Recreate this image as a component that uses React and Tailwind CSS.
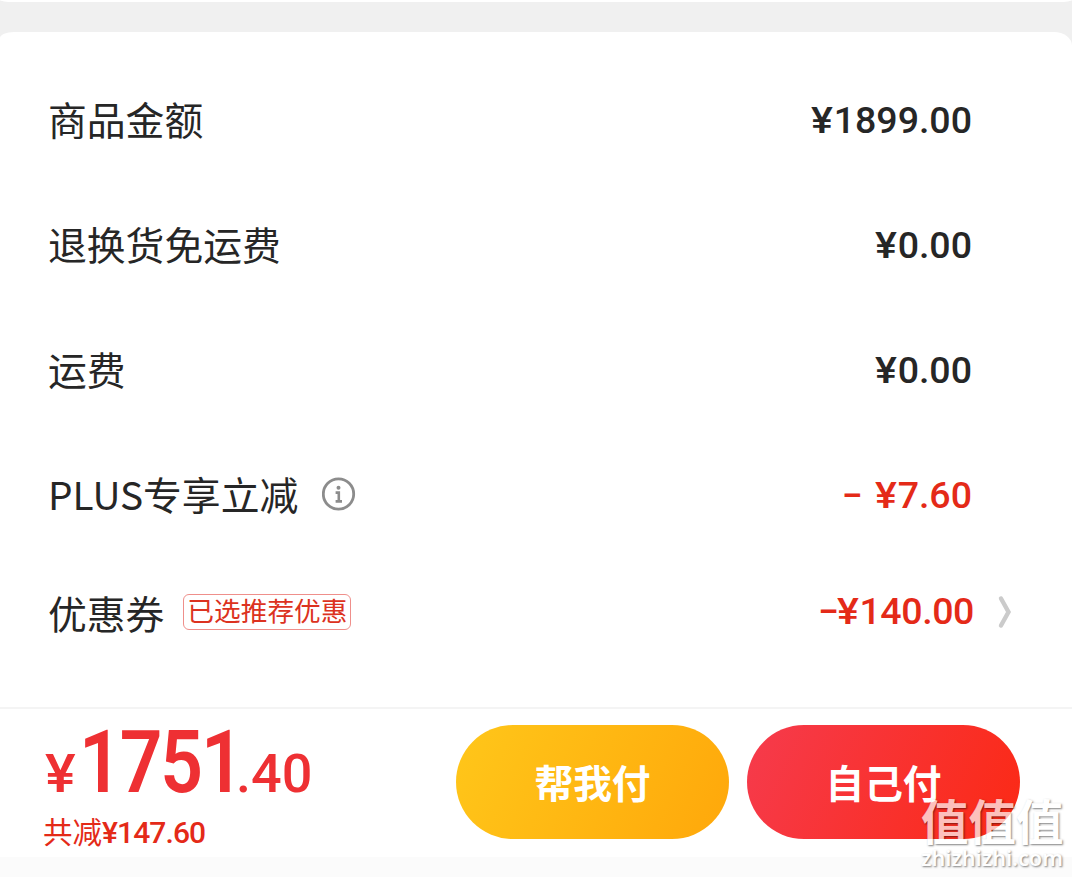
import clsx from "clsx";

const rows = [
  { label: "商品金额", amount: "1899.00" },
  { label: "退换货免运费", amount: "0.00" },
  { label: "运费", amount: "0.00" },
];

const InfoIcon = () => (
  <svg width="34" height="34" viewBox="0 0 34 34" fill="none">
    <circle cx="16.5" cy="17" r="15.2" stroke="#8c8c8c" strokeWidth="2.8" />
    <circle cx="16.5" cy="10.8" r="2" fill="#8c8c8c" />
    <path d="M13.6 15.6H16.8V24.4M13.6 24.4H20" stroke="#8c8c8c" strokeWidth="2.6" />
  </svg>
);

const Chevron = () => (
  <svg width="16" height="34" viewBox="0 0 16 34" fill="none">
    <path
      d="M3 3.5L10.5 17L3 30.5"
      stroke="#cbcbcb"
      strokeWidth="4.4"
      strokeLinecap="round"
    />
  </svg>
);

const Minus = ({ className }) => (
  <span
    className={clsx(
      "inline-block origin-right scale-x-[1.6] -translate-y-px",
      className
    )}
  >
    -
  </span>
);

const Yen = () => (
  <span className="inline-block origin-right scale-x-[1.1] mr-px">¥</span>
);

const Label = ({ children, className }) => (
  <span
    className={clsx(
      "text-[38.8px] leading-none text-[#262626] whitespace-nowrap",
      className
    )}
  >
    {children}
  </span>
);

const Amount = ({ children, className }) => (
  <span
    className={clsx(
      "font-[Roboto,sans-serif] font-medium text-[37.5px] leading-none whitespace-nowrap",
      className
    )}
  >
    {children}
  </span>
);

const App = () => {
  return (
    <div className="relative w-[1072px] h-[877px] overflow-hidden flex flex-col bg-[#f0f0f0] font-['Noto_Sans_CJK_SC',sans-serif]">
      <div className="h-[2px] shrink-0 bg-white rounded-b-[14px_2px]" />

      {/* Price breakdown */}
      <div className="mt-[30px] h-[675px] shrink-0 bg-white rounded-tl-[14px_6px] rounded-tr-[18px_14px] pt-[26px] pl-[48px]">
        {rows.map((row) => (
          <div
            key={row.label}
            className="h-[125px] flex items-center justify-between pr-[100px]"
          >
            <Label className="pb-[5px]">{row.label}</Label>
            <Amount className="text-[#262626]">
              <Yen />
              {row.amount}
            </Amount>
          </div>
        ))}

        <div className="h-[125px] flex items-center justify-between pr-[100px]">
          <div className="flex items-center gap-[24px] pb-[3px]">
            <Label className="pb-px">PLUS专享立减</Label>
            <InfoIcon />
          </div>
          <Amount className="text-[#e42a18]">
            <Minus className="mr-[14px]" />
            <Yen />
            7.60
          </Amount>
        </div>

        <div className="h-[108px] flex items-center justify-between pr-[58px]">
          <div className="flex items-center gap-[19px]">
            <Label>优惠券</Label>
            <span className="w-[168px] h-[36px] pb-[4px] flex items-center justify-center rounded-[6px] border border-[#ef8f8b] text-[26.7px] leading-none text-[#dc3220] whitespace-nowrap">
              已选推荐优惠
            </span>
          </div>
          <div className="flex items-center gap-[24px]">
            <Amount className="text-[#e42a18] tracking-[-0.4px]">
              <Minus className="mr-px" />
              <Yen />
              140.00
            </Amount>
            <Chevron />
          </div>
        </div>
      </div>

      {/* Checkout bar */}
      <div className="h-[150px] shrink-0 bg-white border-t-2 border-[#f4f4f4] flex justify-between pl-[43px] pr-[52px]">
        <div className="pt-[10px] text-[#ee3033]">
          <div className="h-[84px] flex items-baseline font-[Roboto,sans-serif] font-medium leading-none">
            <span className="w-[36px] pl-[2px] text-[54px]">
              <span className="inline-block origin-left scale-x-[1.07]">¥</span>
            </span>
            <span className="w-[157px]">
              <span className="inline-block origin-left scale-x-[0.86] text-[87px] font-semibold tracking-[-2.4px]">
                1751
              </span>
            </span>
            <span className="text-[54px]">.40</span>
          </div>
          <div className="flex items-baseline text-[29.5px] leading-[54px] text-[#e42a18]">
            共减
            <span className="font-[Roboto,sans-serif] font-medium text-[30px] tracking-[-0.9px]">
              ¥147.60
            </span>
          </div>
        </div>

        <div className="flex gap-[18px] pt-[16px] text-white text-[38.7px] font-bold">
          <button className="w-[273px] h-[114px] pb-[2px] rounded-full bg-[linear-gradient(115deg,#ffc519_5%,#ffa90b_95%)]">
            帮我付
          </button>
          <button className="w-[273px] h-[114px] pb-[2px] rounded-full bg-[linear-gradient(115deg,#f63a4a_5%,#fb2a17_95%)]">
            自己付
          </button>
        </div>
      </div>
      <div className="flex-1 bg-[#fbfbfb]" />

      {/* Watermark */}
      <div className="absolute left-[921px] top-[795px] flex flex-col text-white opacity-70 whitespace-nowrap [text-shadow:1px_1px_2px_rgba(0,0,0,0.7)]">
        <span className="text-[47.5px] leading-[50px] font-bold">值值值</span>
        <span className="font-['Noto_Sans',sans-serif] text-[21.6px] leading-[26px] font-semibold">
          zhizhizhi.com
        </span>
      </div>
    </div>
  );
};

export default App;
